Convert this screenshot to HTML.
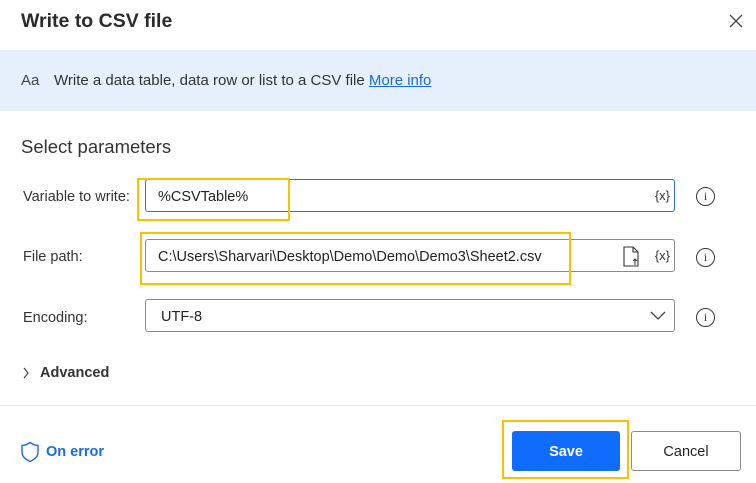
<!DOCTYPE html>
<html><head><style>
*{margin:0;padding:0;box-sizing:border-box}
body{width:756px;height:483px;background:#fff;font-family:"Liberation Sans",sans-serif;color:#252525;position:relative;overflow:hidden}
.a{position:absolute}
.inp{position:absolute;left:145px;width:530px;height:33px;border:1px solid #8a8a8a;border-radius:3px;font-size:14.5px;padding-left:12px;line-height:35px;color:#222}
.lbl{position:absolute;left:23px;font-size:14.5px;color:#333}
.yb{position:absolute;border:2.5px solid #f7c200}
.fx{position:absolute;right:4px;top:-2px;font-size:13px;color:#333}
.info{position:absolute;left:696px;width:19px;height:19px;border:1.3px solid #333;border-radius:50%;font-size:12px;text-align:center;line-height:17px;font-family:"Liberation Serif",serif;color:#333}
</style></head><body>
<div class="a" style="left:21px;top:10px;font-size:19.5px;font-weight:bold;color:#2b2b2b">Write to CSV file</div>
<svg class="a" style="left:729px;top:14px" width="14" height="14"><path d="M1 1L13 13M13 1L1 13" stroke="#444" stroke-width="1.3"/></svg>
<div class="a" style="left:0;top:50px;width:756px;height:61px;background:#e6effc"></div>
<div class="a" style="left:21px;top:72px;font-size:15px;color:#444">Aa</div>
<div class="a" style="left:54px;top:72px;font-size:15px;color:#333">Write a data table, data row or list to a CSV file <span style="color:#1a6ae0;text-decoration:underline">More info</span></div>
<div class="a" style="left:21px;top:136px;font-size:18.5px;color:#333">Select parameters</div>

<div class="lbl" style="top:189px">Variable to write:</div>
<div class="inp" style="top:179px;border-color:#2f6fe0">%CSVTable%<span class="fx">{x}</span></div>
<div class="yb" style="left:137px;top:178px;width:153px;height:43px"></div>
<div class="info" style="top:187px">i</div>

<div class="lbl" style="top:249px">File path:</div>
<div class="inp" style="top:239px">C:\Users\Sharvari\Desktop\Demo\Demo\Demo3\Sheet2.csv<span class="fx">{x}</span>
<svg class="a" style="left:477px;top:6px" width="16" height="21"><path d="M1 1H10L15 6V20H1Z M10 1V6H15" fill="none" stroke="#333" stroke-width="1.1"/><path d="M12 19V13M10 15L12 13L14 15" fill="none" stroke="#333" stroke-width="1"/></svg></div>
<div class="yb" style="left:140px;top:232px;width:431px;height:53px"></div>
<div class="info" style="top:248px">i</div>

<div class="lbl" style="top:310px">Encoding:</div>
<div class="inp" style="top:299px;padding-left:15px">UTF-8
<svg class="a" style="left:504px;top:11px" width="16" height="10"><path d="M1 1L8 8L15 1" fill="none" stroke="#444" stroke-width="1.3"/></svg></div>
<div class="info" style="top:308px">i</div>

<svg class="a" style="left:22px;top:367px" width="8" height="12"><path d="M2 1L6 6L2 11" fill="none" stroke="#444" stroke-width="1.2"/></svg>
<div class="a" style="left:40px;top:365px;font-size:14.5px;font-weight:bold;color:#333">Advanced</div>

<div class="a" style="left:0;top:405px;width:756px;height:1px;background:#e6e6e6"></div>

<svg class="a" style="left:20px;top:441px" width="20" height="22"><path d="M10 1.5C7 3.5 4.5 4.5 2 4.5V11C2 15.5 5.5 18.5 10 20.5C14.5 18.5 18 15.5 18 11V4.5C15.5 4.5 13 3.5 10 1.5Z" fill="none" stroke="#1a6ae0" stroke-width="1.4"/></svg>
<div class="a" style="left:46px;top:444px;font-size:14.5px;color:#1a6ae0;font-weight:bold">On error</div>

<div class="yb" style="left:502px;top:420px;width:127px;height:59px"></div>
<div class="a" style="left:512px;top:431px;width:108px;height:40px;background:#0f6cfd;border-radius:3px;color:#fff;font-size:14.5px;font-weight:bold;text-align:center;line-height:42px">Save</div>
<div class="a" style="left:631px;top:431px;width:110px;height:40px;border:1px solid #8a8a8a;border-radius:3px;color:#222;font-size:14.5px;text-align:center;line-height:40px">Cancel</div>
</body></html>
